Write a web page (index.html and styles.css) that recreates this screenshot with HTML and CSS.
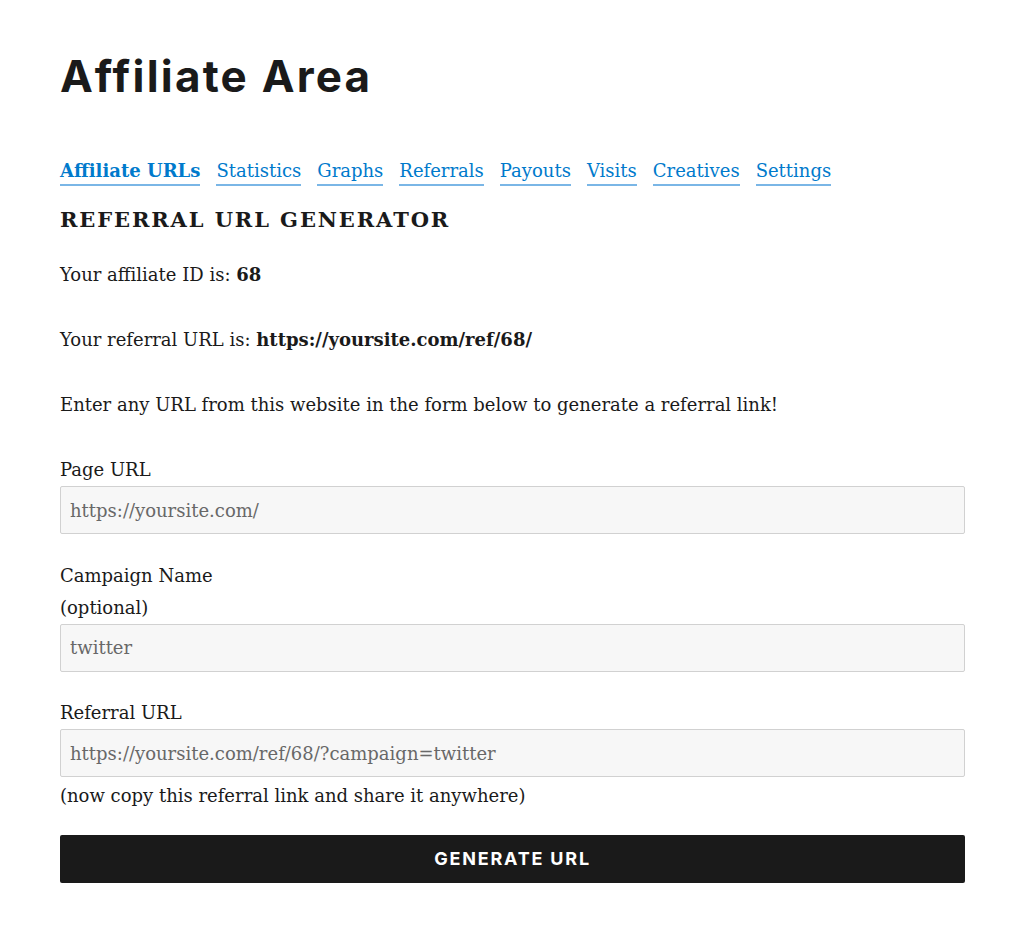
FILE: index.html
```html
<!DOCTYPE html>
<html lang="en">
<head>
<meta charset="utf-8">
<title>Affiliate Area</title>
<link rel="stylesheet" href="styles.css">
</head>
<body>
<main class="page">
  <h1 class="page-title">Affiliate Area</h1>
  <nav class="tabs">
    <a class="tab tab-active" href="#">Affiliate URLs</a>
    <a class="tab" href="#">Statistics</a>
    <a class="tab" href="#">Graphs</a>
    <a class="tab" href="#">Referrals</a>
    <a class="tab" href="#">Payouts</a>
    <a class="tab" href="#">Visits</a>
    <a class="tab" href="#">Creatives</a>
    <a class="tab" href="#">Settings</a>
  </nav>
  <h4 class="section-title">Referral URL Generator</h4>
  <p class="text">Your affiliate ID is: <strong>68</strong></p>
  <p class="text">Your referral URL is: <strong>https://yoursite.com/ref/68/</strong></p>
  <p class="text">Enter any URL from this website in the form below to generate a referral link!</p>
  <form class="generator">
    <div class="field">
      <label class="label" for="url">Page URL</label>
      <input class="input" id="url" type="text" value="https://yoursite.com/">
    </div>
    <div class="field">
      <label class="label" for="campaign">Campaign Name<br>(optional)</label>
      <input class="input" id="campaign" type="text" value="twitter">
    </div>
    <div class="field">
      <label class="label" for="ref">Referral URL</label>
      <input class="input" id="ref" type="text" value="https://yoursite.com/ref/68/?campaign=twitter">
      <p class="hint">(now copy this referral link and share it anywhere)</p>
    </div>
    <button class="button" type="button">Generate URL</button>
  </form>
</main>
</body>
</html>
```

FILE: styles.css
```css
html, body {
  margin: 0;
  padding: 0;
  background: #ffffff;
}

body {
  font-family: "DejaVu Serif", "Liberation Serif", serif;
  font-size: 18px;
  line-height: 32px;
  color: #1a1a1a;
}

.page {
  width: 905px;
  padding: 46px 59px 40px 60px;
}

.page-title {
  margin: 0;
  font-family: "Inter", "DejaVu Sans", sans-serif;
  font-weight: 700;
  font-size: 44px;
  line-height: 60px;
  letter-spacing: 0.05em;
  color: #1a1a1a;
}

.tabs {
  display: flex;
  gap: 16px;
  margin-top: 52px;
  line-height: 32px;
}

.tab {
  color: #007acc;
  text-decoration: none;
  border-bottom: 2px solid #7ab6e6;
  line-height: 26px;
}

.tab-active {
  font-weight: 700;
}

.section-title {
  margin: 18px 0 23px;
  font-size: 21px;
  font-weight: 700;
  letter-spacing: 0.09em;
  text-transform: uppercase;
  line-height: 32px;
}

.text {
  margin: 0 0 33px;
}

.generator {
  display: flex;
  flex-direction: column;
}

.field {
  display: flex;
  flex-direction: column;
  margin-bottom: 25.5px;
}

.label {
  display: block;
}

.input {
  box-sizing: border-box;
  width: 100%;
  height: 48px;
  margin: 0;
  padding: 0 9px;
  font-family: inherit;
  font-size: 18px;
  color: #686868;
  background: #f7f7f7;
  border: 1px solid #d1d1d1;
  border-radius: 2px;
  outline: none;
}

.hint {
  margin: 3px 0 0;
}

.button {
  height: 48px;
  margin: -3px 0 0;
  padding: 0;
  background: #1a1a1a;
  color: #ffffff;
  border: 0;
  border-radius: 2px;
  font-family: "Inter", "DejaVu Sans", sans-serif;
  font-weight: 700;
  font-size: 18px;
  letter-spacing: 0.1em;
  text-transform: uppercase;
}
```
